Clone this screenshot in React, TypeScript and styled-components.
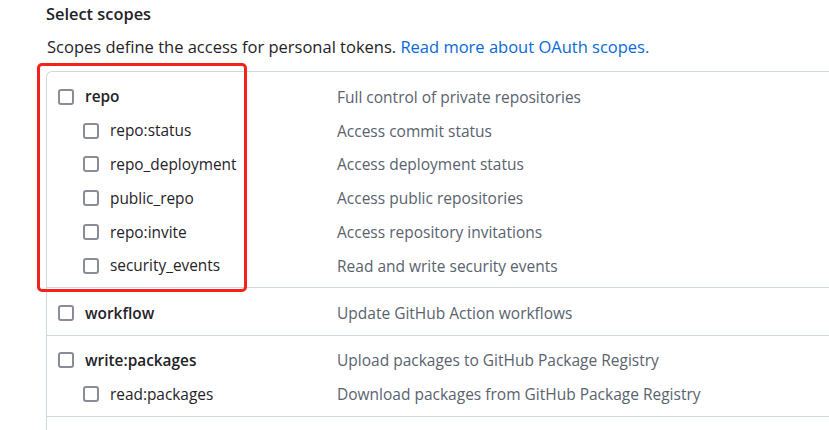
import React from "react";
import styled, { createGlobalStyle } from "styled-components";

const Global = createGlobalStyle`
  html, body { margin: 0; padding: 0; background: #ffffff; overflow: hidden; }
  body { font-family: "Open Sans", "Noto Sans", sans-serif; color: #1f2328; }
`;

const Page = styled.div`
  width: 829px;
  height: 430px;
  padding-left: 46px;
  box-sizing: border-box;
  overflow: hidden;
`;

const Title = styled.h3`
  margin: 0;
  padding-top: 2px;
  font-size: 16.4px;
  line-height: 24px;
  font-weight: 600;
  color: #1f2328;
`;

const Intro = styled.p`
  margin: 9px 0 0 1px;
  font-size: 16.5px;
  line-height: 24px;
  color: #1f2328;
`;

const Link = styled.a`
  color: #0969da;
  text-decoration: none;
`;

const TableWrap = styled.div`
  position: relative;
  margin-top: 12px;
`;

const Table = styled.div`
  width: 1000px;
  height: 400px;
  border-top: 1px solid #d0d7de;
  border-left: 1px solid #d0d7de;
  border-top-left-radius: 6px;
`;

const Group = styled.div`
  padding: 8px 0 4.5px;
  border-bottom: 1px solid #d0d7de;
`;

const Row = styled.div`
  display: grid;
  grid-template-columns: 279px 1fr;
  align-items: center;
  height: 33.8px;
  padding-left: 11px;
`;

const LabelCell = styled.label<{ $sub?: boolean }>`
  display: flex;
  align-items: center;
  gap: 11px;
  padding-left: ${(p) => (p.$sub ? "25px" : "0")};
  font-size: 15.4px;
  font-weight: ${(p) => (p.$sub ? 400 : 600)};
  color: #1f2328;
  white-space: nowrap;
`;

const Box = styled.span`
  width: 16px;
  height: 16px;
  box-sizing: border-box;
  border: 2px solid #8a8d96;
  border-radius: 3px;
  background: #ffffff;
  flex: none;
`;

const Desc = styled.span`
  font-size: 15.5px;
  color: #59636e;
  white-space: nowrap;
`;

const Highlight = styled.div`
  position: absolute;
  left: -9px;
  top: -8px;
  width: 210px;
  height: 229px;
  box-sizing: border-box;
  border: 3px solid #f5221b;
  border-radius: 5px;
  pointer-events: none;
`;

type Scope = { name: string; desc: string; sub?: boolean };

const groups: Scope[][] = [
  [
    { name: "repo", desc: "Full control of private repositories" },
    { name: "repo:status", desc: "Access commit status", sub: true },
    { name: "repo_deployment", desc: "Access deployment status", sub: true },
    { name: "public_repo", desc: "Access public repositories", sub: true },
    { name: "repo:invite", desc: "Access repository invitations", sub: true },
    { name: "security_events", desc: "Read and write security events", sub: true },
  ],
  [{ name: "workflow", desc: "Update GitHub Action workflows" }],
  [
    { name: "write:packages", desc: "Upload packages to GitHub Package Registry" },
    { name: "read:packages", desc: "Download packages from GitHub Package Registry", sub: true },
  ],
];

export default function App() {
  return (
    <>
      <Global />
      <Page>
        <Title>Select scopes</Title>
        <Intro>
          Scopes define the access for personal tokens. <Link href="#">Read more about OAuth scopes.</Link>
        </Intro>
        <TableWrap>
          <Table>
            {groups.map((g, i) => (
              <Group key={i}>
                {g.map((s) => (
                  <Row key={s.name}>
                    <LabelCell $sub={s.sub}>
                      <Box />
                      {s.name}
                    </LabelCell>
                    <Desc>{s.desc}</Desc>
                  </Row>
                ))}
              </Group>
            ))}
          </Table>
          <Highlight />
        </TableWrap>
      </Page>
    </>
  );
}
